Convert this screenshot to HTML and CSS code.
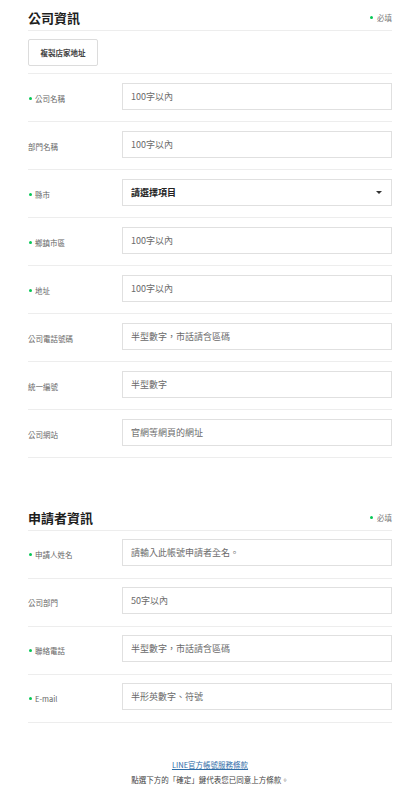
FILE: index.html
```html
<!DOCTYPE html>
<html lang="zh-Hant">
<head>
<meta charset="utf-8">
<title>申請表單</title>
<link rel="stylesheet" href="styles.css">
</head>
<body>
<div class="page">
  <section class="section">
    <div class="sec-head">
      <h2 class="sec-title">公司資訊</h2>
      <span class="req-note">必填</span>
    </div>
    <div class="btn-row">
      <button class="copy-btn" type="button">複製店家地址</button>
    </div>
    <div class="row"><div class="label req">公司名稱</div><div class="field"><span class="ph">100字以內</span></div></div>
    <div class="row"><div class="label">部門名稱</div><div class="field"><span class="ph">100字以內</span></div></div>
    <div class="row"><div class="label req">縣市</div><div class="field select"><span class="sel">請選擇項目</span><span class="caret"></span></div></div>
    <div class="row"><div class="label req">鄉鎮市區</div><div class="field"><span class="ph">100字以內</span></div></div>
    <div class="row"><div class="label req">地址</div><div class="field"><span class="ph">100字以內</span></div></div>
    <div class="row"><div class="label">公司電話號碼</div><div class="field"><span class="ph">半型數字，市話請含區碼</span></div></div>
    <div class="row"><div class="label">統一編號</div><div class="field"><span class="ph">半型數字</span></div></div>
    <div class="row"><div class="label">公司網站</div><div class="field"><span class="ph">官網等網頁的網址</span></div></div>
  </section>

  <section class="section second">
    <div class="sec-head">
      <h2 class="sec-title">申請者資訊</h2>
      <span class="req-note">必填</span>
    </div>
    <div class="row"><div class="label req">申請人姓名</div><div class="field"><span class="ph">請輸入此帳號申請者全名。</span></div></div>
    <div class="row"><div class="label">公司部門</div><div class="field"><span class="ph">50字以內</span></div></div>
    <div class="row"><div class="label req">聯絡電話</div><div class="field"><span class="ph">半型數字，市話請含區碼</span></div></div>
    <div class="row"><div class="label req">E-mail</div><div class="field"><span class="ph">半形英數字、符號</span></div></div>
  </section>

  <footer class="terms">
    <a class="terms-link" href="#">LINE官方帳號服務條款</a>
    <p class="terms-note">點選下方的「確定」鍵代表您已同意上方條款。</p>
  </footer>
</div>
</body>
</html>
```

FILE: styles.css
```css
html, body {
  margin: 0;
  padding: 0;
  background: #ffffff;
}
body {
  font-family: "Noto Sans CJK TC", "Noto Sans", "Liberation Sans", sans-serif;
  color: #333;
}
.page {
  padding: 0 25px 0 28px;
}
.sec-head {
  display: flex;
  align-items: center;
  justify-content: space-between;
  height: 26px;
  padding-top: 4px;
  border-bottom: 1px solid #ededed;
}
.second .sec-head {
  height: 25px;
}
.sec-title {
  margin: 0;
  font-size: 13px;
  font-weight: 700;
  color: #1e1e1e;
  line-height: 1;
}
.req-note {
  font-size: 7.5px;
  color: #777;
  display: flex;
  align-items: center;
}
.req-note::before,
.label.req::before {
  content: "";
  display: inline-block;
  width: 3px;
  height: 3px;
  border-radius: 50%;
  background: #06c755;
  margin-right: 4px;
}
.btn-row {
  padding: 8px 0 7px;
  border-bottom: 1px solid #ededed;
}
.copy-btn {
  display: block;
  width: 70px;
  height: 27px;
  padding: 0;
  background: #fff;
  border: 1px solid #dcdcdc;
  border-radius: 2px;
  font-family: inherit;
  font-size: 7.5px;
  font-weight: 700;
  color: #444;
}
.row {
  display: flex;
  align-items: center;
  padding: 9px 0 11px;
  border-bottom: 1px solid #ededed;
}
.second .row {
  padding: 8px 0 12px;
}
.label {
  width: 94px;
  flex: none;
  display: flex;
  align-items: center;
  font-size: 7.5px;
  color: #666;
  padding-top: 3px;
}
.label.req::before {
  margin-left: 1px;
  margin-right: 3px;
}
.field {
  flex: 1;
  height: 27px;
  box-sizing: border-box;
  border: 1px solid #e0e0e0;
  display: flex;
  align-items: center;
  padding: 0 8px;
}
.ph {
  font-size: 9px;
  color: #6a6a6a;
}
.select {
  justify-content: space-between;
  padding-right: 9px;
}
.sel {
  font-size: 9px;
  font-weight: 700;
  color: #222;
}
.caret {
  width: 0;
  height: 0;
  border-left: 3px solid transparent;
  border-right: 3px solid transparent;
  border-top: 3px solid #333;
}
.second {
  margin-top: 43px;
}
.terms {
  margin-top: 26px;
  text-align: center;
}
.terms-link {
  display: inline-block;
  font-size: 7.5px;
  color: #2f6da8;
  text-decoration: underline;
  line-height: 14px;
}
.terms-note {
  margin: 0;
  font-size: 7.5px;
  color: #444;
  line-height: 14px;
}
```
